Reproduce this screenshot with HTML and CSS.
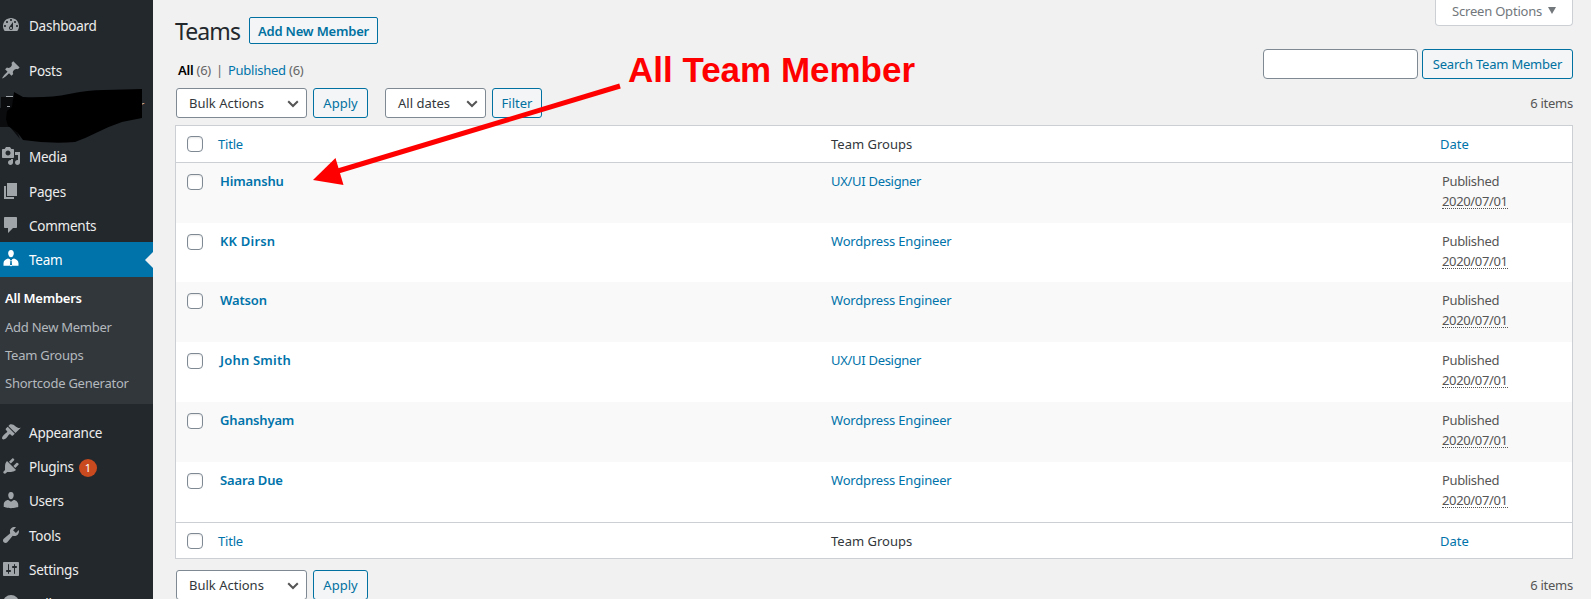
FILE: index.html
```html
<!DOCTYPE html>
<html lang="en">
<head>
<meta charset="utf-8">
<title>Teams</title>
<link rel="stylesheet" href="styles.css">
</head>
<body>
<nav class="sidebar">
  <a class="item"><svg class="icon" viewBox="0 0 20 20"><path fill-rule="evenodd" d="M3.76 16h12.48c1.1-1.37 1.76-3.11 1.76-5 0-4.42-3.58-8-8-8s-8 3.58-8 8c0 1.89.66 3.63 1.76 5zM10 4c.55 0 1 .45 1 1s-.45 1-1 1-1-.45-1-1 .45-1 1-1zM6 6c.55 0 1 .45 1 1s-.45 1-1 1-1-.45-1-1 .45-1 1-1zm8 0c.55 0 1 .45 1 1s-.45 1-1 1-1-.45-1-1 .45-1 1-1zm-5.37 5.55L12 7v6c0 1.1-.9 2-2 2s-2-.9-2-2c0-.57.24-1.08.63-1.45zM4 10c.55 0 1 .45 1 1s-.45 1-1 1-1-.45-1-1 .45-1 1-1zm12 0c.55 0 1 .45 1 1s-.45 1-1 1-1-.45-1-1 .45-1 1-1zm-5 3c0-.55-.45-1-1-1s-1 .45-1 1 .45 1 1 1 1-.45 1-1z"/></svg><span>Dashboard</span></a>
  <a class="item after-gap"><svg class="icon" viewBox="0 0 20 20"><path d="M10.44 3.02l1.82-1.82 6.36 6.35-1.83 1.82c-1.05-.68-2.48-.57-3.41.36l-.75.75c-.92.93-1.04 2.35-.35 3.41l-1.83 1.82-2.41-2.41-2.8 2.79c-.42.42-3.38 2.71-3.8 2.29s1.86-3.39 2.28-3.81l2.79-2.79L4.1 9.36l1.83-1.82c1.05.69 2.48.57 3.4-.36l.75-.75c.93-.92 1.05-2.35.36-3.41z"/></svg><span>Posts</span></a>
  <div class="hidden-item"><span>r</span>
    <svg class="scribble" viewBox="0 0 153 54"><path fill="#0b0c0e" d="M0 19L12 18 14 34 20 50 10 38 0 38z"/><path fill="#0b0c0e" d="M1 8h12v11H1z"/><path fill="#a0a5aa" d="M6 7h7v1H6zM7 17h3v1H7z"/><path d="M14 3L23 8Q50 9 69 5T104 1L142 0V29L122 33Q110 37 98 43T75 53Q50 55 23 51L17 43 8 37 6 30 7 22 12 18z"/></svg>
  </div>
  <a class="item"><svg class="icon" viewBox="0 0 20 20"><path fill-rule="evenodd" d="M13 11V4c0-.55-.45-1-1-1h-1.67L9 1H5L3.67 3H2c-.55 0-1 .45-1 1v7c0 .55.45 1 1 1h10c.55 0 1-.45 1-1zM7 4.5c1.38 0 2.5 1.12 2.5 2.5S8.38 9.5 7 9.5 4.5 8.38 4.5 7 5.62 4.5 7 4.5zM14 6h5v10.5c0 1.38-1.12 2.5-2.5 2.5S14 17.88 14 16.5s1.12-2.5 2.5-2.5c.17 0 .34.02.5.05V9h-3V6zm-4 8.05V13h2v3.5c0 1.38-1.12 2.5-2.5 2.5S7 17.88 7 16.5 8.12 14 9.5 14c.17 0 .34.02.5.05z"/></svg><span>Media</span></a>
  <a class="item lower"><svg class="icon" viewBox="0 0 20 20"><path d="M6 15V2h10v13H6zm-1 1h8v2H3V5h2v11z"/></svg><span>Pages</span></a>
  <a class="item lower"><svg class="icon" viewBox="0 0 20 20"><path d="M4 2h11c.6 0 1 .4 1 1v9c0 .6-.4 1-1 1h-3l-5 5v-5H4c-.6 0-1-.4-1-1V3c0-.6.4-1 1-1z"/></svg><span>Comments</span></a>
  <a class="item current"><svg class="icon" viewBox="0 0 20 20"><path d="M10 1c2.100 0 3 1.700 2.800 3.700C12.500 6.900 11.500 8.300 10 8.300S7.500 6.900 7.200 4.700C7 2.700 7.900 1 10 1zM7 9.500l2 .7-.1 1.600-.5 4.200.9.900h1.400l.9-.9-.5-4.200-.1-1.600 2-.7c2.500.6 4.500 2.500 4.500 4.700v2.600H2.500v-2.600c0-2.200 2-4.100 4.500-4.700z"/><path class="tie-edge" d="M8.500 11h3l.8 4.500-2.300 2-2.300-2z"/><path class="tie" d="M9.300 11.500h1.400v1l.3 3.500h-2l.3-3.500z"/></svg><span>Team</span></a>
  <div class="submenu">
    <a class="selected">All Members</a><a>Add New Member</a><a>Team Groups</a><a>Shortcode Generator</a>
  </div>
  <a class="item after-gap"><svg class="icon" viewBox="0 0 20 20"><path d="M14.48 11.06L7.41 3.99l1.5-1.5c.5-.56 2.3-.47 3.51.32 1.21.8 1.43 1.28 2.91 2.1 1.18.64 2.45 1.26 4.45.85zm-.71.71L6.7 4.7 4.93 6.47c-.39.39-.39 1.02 0 1.41l1.06 1.06c.39.39.39 1.03 0 1.42-.6.6-1.43 1.11-2.21 1.69-.35.26-.7.53-1.01.84C1.43 14.23.4 16.08 1.4 17.07c.99 1 2.84-.03 4.18-1.36.31-.31.58-.66.85-1.02.57-.78 1.08-1.61 1.69-2.21.39-.39 1.02-.39 1.41 0l1.06 1.06c.39.39 1.02.39 1.41 0z"/></svg><span>Appearance</span></a>
  <a class="item"><svg class="icon" viewBox="0 0 20 20"><path d="M13.11 4.36L9.87 7.6 8 5.73l3.24-3.24c.35-.34 1.05-.2 1.56.32.52.51.66 1.21.31 1.55zm-8 1.77l.91-1.12 9.01 9.01-1.19.84c-.71.71-2.63 1.16-3.82 1.16H6.14L4.9 17.26c-.59.59-1.54.59-2.12 0-.59-.58-.59-1.53 0-2.12l1.24-1.24v-3.88c0-1.13.4-3.19 1.09-3.89zm7.26 3.97l3.24-3.24c.34-.35 1.04-.21 1.55.31.52.51.66 1.21.31 1.55l-3.24 3.25z"/></svg><span>Plugins</span><b class="count">1</b></a>
  <a class="item"><svg class="icon" viewBox="0 0 20 20"><path d="M10 9.250c-2.270 0-2.730-3.440-2.730-3.440C7 4.020 7.820 2 9.970 2c2.160 0 2.980 2.020 2.710 3.810 0 0-.41 3.440-2.680 3.440zm0 2.570L12.720 10c2.390 0 4.520 2.330 4.520 4.530v2.490s-3.650 1.130-7.240 1.130c-3.650 0-7.240-1.130-7.240-1.130v-2.490c0-2.250 1.940-4.480 4.470-4.480z"/></svg><span>Users</span></a>
  <a class="item"><svg class="icon" viewBox="0 0 20 20"><path d="M16.680 9.770c-1.340 1.340-3.300 1.670-4.950.99l-5.410 6.520c-.99.99-2.590.99-3.580 0s-.99-2.590 0-3.570l6.520-5.420c-.68-1.650-.35-3.610.99-4.950 1.280-1.280 3.120-1.620 4.720-1.060l-2.890 2.890 2.820 2.820 2.860-2.870c.53 1.580.18 3.390-1.080 4.650z"/></svg><span>Tools</span></a>
  <a class="item"><svg class="icon" viewBox="0 0 20 20"><path fill-rule="evenodd" d="M18 16V4c0-.55-.45-1-1-1H3c-.55 0-1 .45-1 1v12c0 .55.45 1 1 1h14c.55 0 1-.45 1-1zM8 11h1c.55 0 1 .45 1 1s-.45 1-1 1H8v1.500c0 .28-.22.5-.5.5s-.5-.22-.5-.5V13H6c-.55 0-1-.45-1-1s.45-1 1-1h1V5.500c0-.28.22-.5.5-.5s.5.22.5.5V11zm5-2h-1c-.55 0-1-.45-1-1s.45-1 1-1h1V5.500c0-.28.22-.5.5-.5s.5.22.5.5V7h1c.55 0 1 .45 1 1s-.45 1-1 1h-1v5.500c0 .28-.22.5-.5.5s-.5-.22-.5-.5V9z"/></svg><span>Settings</span></a>
  <a class="item"><svg class="icon" viewBox="0 0 20 20"><circle cx="10" cy="10" r="8"/></svg><span>Collapse</span></a>
</nav>

<main class="content">
  <header class="top">
    <h1>Teams</h1><a class="button add">Add New Member</a>
    <div class="screen-options">Screen Options<i></i></div>
  </header>
  <div class="views">
    <p class="links"><b>All</b> <span>(6)</span><span class="bar">|</span><a>Published</a> <span>(6)</span></p>
    <div class="search"><span class="field"></span><a class="button find">Search Team Member</a></div>
  </div>
  <div class="tablenav">
    <span class="select bulk">Bulk Actions<svg viewBox="0 0 12 8"><path d="M1.200 1.200L6 6l4.800-4.800"/></svg></span>
    <a class="button apply">Apply</a>
    <span class="select dates">All dates<svg viewBox="0 0 12 8"><path d="M1.200 1.200L6 6l4.800-4.800"/></svg></span>
    <a class="button filter">Filter</a>
    <span class="total">6 items</span>
  </div>
  <section class="table">
    <div class="row head"><i class="check"></i><a class="name">Title</a><span>Team Groups</span><a class="date">Date</a></div>
    <div class="row odd"><i class="check"></i><strong>Himanshu</strong><a class="group ux">UX/UI Designer</a><p>Published<br><abbr>2020/07/01</abbr></p></div>
    <div class="row short"><i class="check"></i><strong class="wide">KK Dirsn</strong><a class="group">Wordpress Engineer</a><p>Published<br><abbr>2020/07/01</abbr></p></div>
    <div class="row odd"><i class="check"></i><strong>Watson</strong><a class="group">Wordpress Engineer</a><p>Published<br><abbr>2020/07/01</abbr></p></div>
    <div class="row"><i class="check"></i><strong class="wide">John Smith</strong><a class="group ux">UX/UI Designer</a><p>Published<br><abbr>2020/07/01</abbr></p></div>
    <div class="row odd"><i class="check"></i><strong>Ghanshyam</strong><a class="group">Wordpress Engineer</a><p>Published<br><abbr>2020/07/01</abbr></p></div>
    <div class="row"><i class="check"></i><strong>Saara Due</strong><a class="group">Wordpress Engineer</a><p>Published<br><abbr>2020/07/01</abbr></p></div>
    <div class="row head foot"><i class="check"></i><a class="name">Title</a><span>Team Groups</span><a class="date">Date</a></div>
  </section>
  <div class="tablenav bottom">
    <span class="select bulk">Bulk Actions<svg viewBox="0 0 12 8"><path d="M1.200 1.200L6 6l4.800-4.800"/></svg></span>
    <a class="button apply">Apply</a>
    <span class="total">6 items</span>
  </div>
</main>
<svg class="annotation" viewBox="0 0 1591 599">
  <path d="M620 86L338 171" stroke="red" stroke-width="5"/>
  <path d="M313 180L335.500 158 343.500 185z" fill="red"/>
  <text x="628" y="82" textLength="287" lengthAdjust="spacingAndGlyphs">All Team Member</text>
</svg>
</body>
</html>
```
FILE: styles.css
```css
* { box-sizing: border-box; }
body {
  margin: 0;
  display: flex;
  height: 599px;
  overflow: hidden;
  position: relative;
  background: #f1f1f1;
  color: #32373c;
  font: 13px/20px "Noto Sans", sans-serif;
  white-space: nowrap;
}
a { color: #0073aa; }
h1, p { margin: 0; font-weight: 400; }

.sidebar {
  width: 153px;
  height: 599px;
  flex: none;
  padding-top: 9px;
  background: #23282d;
  overflow: hidden;
}
.item {
  display: flex;
  align-items: center;
  height: 34.250px;
  padding-left: 1px;
  color: #eee;
  font-size: 13.500px;
  letter-spacing: -.25px;
}
.icon { width: 20px; height: 20px; margin: -2px 8px 0 0; fill: #a0a5aa; }
.after-gap { margin-top: 11px; }
.lower { padding-top: 1.500px; }
.hidden-item { position: relative; height: 51.500px; }
.hidden-item span { display: block; padding: 6px 0 0 139px; color: #c8a890; }
.scribble { position: absolute; left: 0; top: 0; width: 153px; height: 54px; }
.current { position: relative; height: 35px; background: #0073aa; color: #fff; }
.current .icon { fill: #fff; }
.current .icon .tie-edge { fill: #fff; }
.current .icon .tie { fill: #0073aa; }
.current::after {
  content: "";
  position: absolute;
  right: 0;
  top: 10px;
  border: 8px solid transparent;
  border-left: 0;
  border-right-color: #f1f1f1;
}
.hidden-item + .item { margin-top: -.5px; }
.submenu {
  display: flex;
  flex-direction: column;
  height: 127px;
  padding: 7px 0 0 5px;
  background: #32373c;
  letter-spacing: -.25px;
}
.submenu a { height: 28.300px; line-height: 28px; color: #b4b9be; }
.submenu .selected { color: #fff; font-weight: 600; }
.submenu + .item { margin-top: 11.500px; }
.count {
  width: 18px;
  height: 18px;
  margin: 1px 0 0 5px;
  border-radius: 50%;
  background: #ca4a1f;
  color: #fff;
  font: 11px/18px "Noto Sans", sans-serif;
  text-align: center;
}

.content { flex: 1; padding: 0 18px 0 22px; }
.top { display: flex; height: 49px; }
h1 { width: 74px; padding-top: 15px; font-size: 23px; line-height: 32px; letter-spacing: -.9px; color: #23282d; }
.button {
  display: block;
  height: 30px;
  border: 1px solid #0071a1;
  border-radius: 3px;
  background: #f3f5f6;
  color: #0071a1;
  line-height: 28px;
  text-align: center;
}
.add { width: 129px; height: 27px; margin-top: 17px; border-radius: 2px; line-height: 26px; font-weight: 600; letter-spacing: -.2px; }
.screen-options {
  display: flex;
  align-items: center;
  width: 138px;
  height: 26px;
  margin-left: auto;
  padding: 0 0 4px 16px;
  border: 1px solid #ccd0d4;
  border-top: 0;
  border-radius: 0 0 4px 4px;
  background: #fff;
  color: #72777c;
  letter-spacing: -.2px;
}
.screen-options i { margin-left: 6px; border: 4.500px solid transparent; border-top: 7px solid #72777c; border-bottom: 0; }
.views { display: flex; height: 39px; }
.links { padding: 11px 0 0 3px; color: #666; letter-spacing: -.25px; }
.links b { color: #000; font-weight: 600; }
.bar { margin: 0 5px; }
.search { display: flex; gap: 4px; margin-left: auto; }
.field { width: 155px; height: 30px; border: 1px solid #7e8993; border-radius: 4px; background: #fff; }
.find { width: 151px; letter-spacing: -.2px; }
.tablenav { display: flex; height: 37px; padding-left: 1px; }
.select {
  display: flex;
  align-items: center;
  justify-content: space-between;
  height: 30px;
  padding: 0 7px 0 12px;
  border: 1px solid #7e8993;
  border-radius: 3px;
  background: #fff;
}
.select svg { width: 12px; height: 8px; margin-top: 2px; fill: none; stroke: #555; stroke-width: 2; }
.bulk { width: 131px; }
.apply { width: 55px; margin: 0 17px 0 6px; }
.dates { width: 101px; margin-right: 6px; }
.filter { width: 50px; }
.total { margin-left: auto; padding-top: 5px; color: #555; letter-spacing: -.25px; }
.bottom { margin-top: 11px; height: 30px; }

.table { border: 1px solid #ccd0d4; background: #fff; height: 434px; }
.row {
  display: grid;
  grid-template-columns: 44px 611px 611px 1fr;
  align-items: start;
  height: 60px;
  padding-top: 9px;
}
.short { height: 59px; }
.odd { background: #f9f9f9; }
.row strong { color: #0073aa; font-weight: 600; letter-spacing: -.15px; line-height: 19px; }
.row .wide { letter-spacing: .2px; }
.row .group { letter-spacing: -.18px; line-height: 19px; }
.row .ux { letter-spacing: -.3px; }
.check {
  width: 16px;
  height: 16px;
  margin: 2px 0 0 11px;
  border: 1px solid #7e8993;
  border-radius: 4px;
  background: #fff;
  box-shadow: inset 0 1px 2px rgba(0, 0, 0, .1);
}
.row p { line-height: 19.500px; color: #555; letter-spacing: -.35px; }
abbr { border-bottom: 1px dotted #555; line-height: 13px; display: inline-block; }
.head { height: 37px; padding-top: 8px; border-bottom: 1px solid #ccd0d4; }
.head .name, .head .date { margin-left: -2px; }
.head .name { letter-spacing: -.2px; }
.foot { height: 36px; border: 0; border-top: 1px solid #ccd0d4; }

.annotation { position: absolute; left: 0; top: 0; width: 1591px; height: 599px; pointer-events: none; }
.annotation text { font: bold 35px "Liberation Sans", sans-serif; fill: red; }
```
